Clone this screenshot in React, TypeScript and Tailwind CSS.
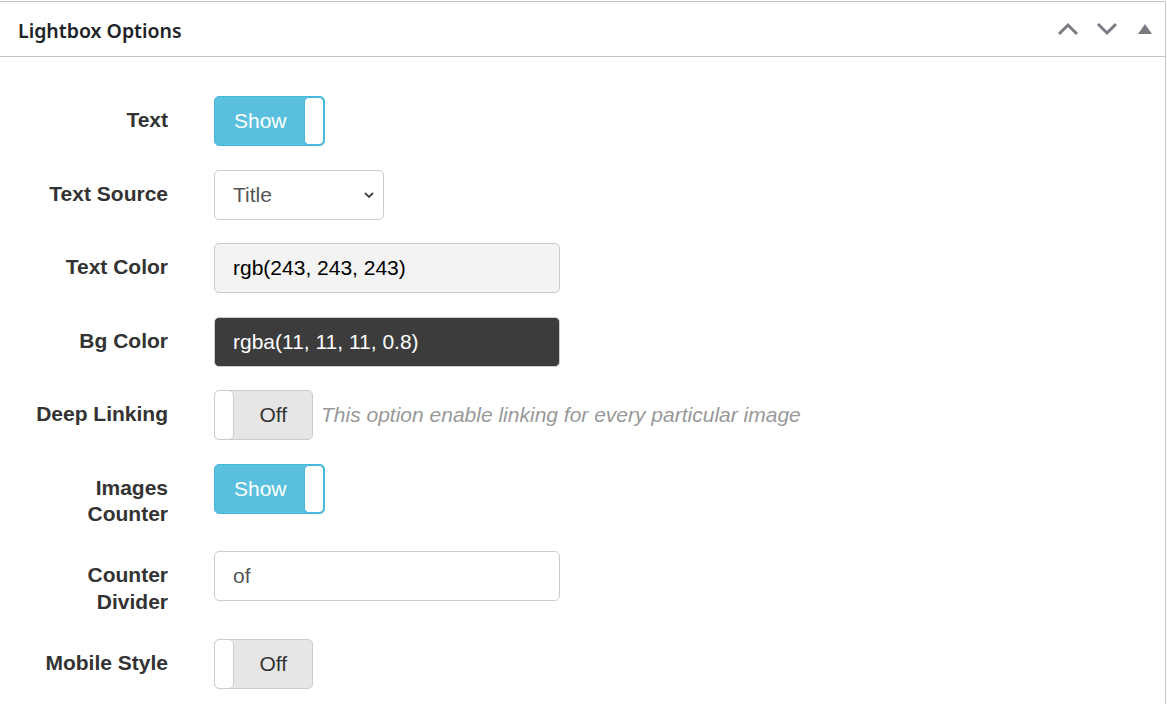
import React from 'react';

const labelFont = { fontFamily: '"Liberation Sans", Arial, sans-serif' };

interface RowProps {
  label: React.ReactNode;
  children: React.ReactNode;
}

const Row: React.FC<RowProps> = ({ label, children }) => (
  <div className="flex items-start">
    <div className="w-[143px] ml-[25px] pt-[11px] text-right text-[21px] leading-[26.5px] font-bold text-[#333]">
      {label}
    </div>
    <div className="ml-[46px] flex items-center">{children}</div>
  </div>
);

const ShowToggle: React.FC = () => (
  <div className="relative flex h-[50px] w-[111px] items-center rounded-[5px] border border-[#46b8da] bg-[#5bc0de]">
    <span className="pl-[19px] text-[21px] text-white">Show</span>
    <div className="absolute right-0 top-0 h-full w-[20px] rounded-[5px] border border-[#46b8da] bg-white" />
  </div>
);

const OffToggle: React.FC = () => (
  <div className="relative flex h-[50px] w-[99px] items-center justify-end rounded-[5px] border border-[#ccc] bg-[#e6e6e6]">
    <div className="absolute left-0 top-0 h-full w-[19px] rounded-[5px] border-r border-[#ccc] bg-white" />
    <span className="pr-[25px] text-[21px] text-[#333]">Off</span>
  </div>
);

const Input: React.FC<{ value: string; className?: string }> = ({ value, className = '' }) => (
  <div
    className={`flex h-[50px] w-[346px] items-center rounded-[5px] border border-[#ccc] px-[18px] text-[21px] ${className}`}
  >
    {value}
  </div>
);

export default function App() {
  return (
    <div className="min-h-screen bg-white" style={labelFont}>
      <div className="mt-px w-[1166px] border-t border-r border-[#c3c4c7]">
        {/* Header */}
        <div className="flex h-[55px] items-center justify-between border-b border-[#c3c4c7] pl-[18px] pr-[13px]">
          <h2
            className="pt-[3px] text-[19.5px] font-semibold text-[#1d2327]"
            style={{ fontFamily: '"Noto Sans", "Open Sans", sans-serif' }}
          >
            Lightbox Options
          </h2>
          <div className="flex items-center">
            <svg width="22" height="14" viewBox="0 0 22 14" className="mr-[17px]">
              <path d="M2 12 L11 3 L20 12" fill="none" stroke="#787c82" strokeWidth="3" />
            </svg>
            <svg width="22" height="14" viewBox="0 0 22 14" className="mr-[20px]">
              <path d="M2 2 L11 11 L20 2" fill="none" stroke="#787c82" strokeWidth="3" />
            </svg>
            <svg width="14" height="10" viewBox="0 0 14 10">
              <path d="M7 0 L14 10 L0 10 Z" fill="#787c82" />
            </svg>
          </div>
        </div>

        {/* Body */}
        <div className="flex flex-col gap-[23.5px] pt-[39px] pb-[16px]">
          <Row label="Text">
            <ShowToggle />
          </Row>
          <Row label="Text Source">
            <div className="flex h-[50px] w-[170px] items-center justify-between rounded-[5px] border border-[#ccc] bg-white pl-[18px] pr-[8px] text-[21px] text-[#555]">
              <span>Title</span>
              <svg width="12" height="8" viewBox="0 0 12 8">
                <path d="M2 2 L6 6 L10 2" fill="none" stroke="#444" strokeWidth="1.8" />
              </svg>
            </div>
          </Row>
          <Row label="Text Color">
            <Input value="rgb(243, 243, 243)" className="bg-[#f3f3f3] text-black" />
          </Row>
          <Row label="Bg Color">
            <Input value="rgba(11, 11, 11, 0.8)" className="bg-[#3c3c3c] text-white" />
          </Row>
          <Row label="Deep Linking">
            <OffToggle />
            <span className="ml-[8px] text-[21px] italic text-[#999]">
              This option enable linking for every particular image
            </span>
          </Row>
          <Row label="Images Counter">
            <ShowToggle />
          </Row>
          <Row label="Counter Divider">
            <Input value="of" className="bg-white text-[#555]" />
          </Row>
          <Row label="Mobile Style">
            <OffToggle />
          </Row>
        </div>
      </div>
    </div>
  );
}
